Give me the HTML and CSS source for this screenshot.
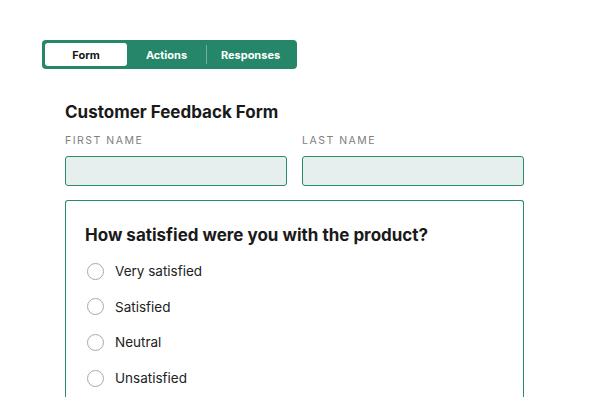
FILE: index.html
```html
<!DOCTYPE html>
<html>
<head>
<meta charset="utf-8">
<link rel="stylesheet" href="styles.css">
</head>
<body>
<div class="page">
  <nav class="tabs">
    <span class="tab tab-form active">Form</span>
    <span class="tab tab-actions">Actions</span>
    <span class="divider"></span>
    <span class="tab tab-responses">Responses</span>
  </nav>
  <form class="form">
    <h1 class="title">Customer Feedback Form</h1>
    <div class="names">
      <label class="field">
        <span class="label">FIRST NAME</span>
        <span class="input"></span>
      </label>
      <label class="field">
        <span class="label">LAST NAME</span>
        <span class="input"></span>
      </label>
    </div>
    <section class="question">
      <h2 class="q-title">How satisfied were you with the product?</h2>
      <ul class="options">
        <li class="option"><span class="radio"></span>Very satisfied</li>
        <li class="option"><span class="radio"></span>Satisfied</li>
        <li class="option"><span class="radio"></span>Neutral</li>
        <li class="option"><span class="radio"></span>Unsatisfied</li>
      </ul>
    </section>
  </form>
</div>
</body>
</html>
```
FILE: styles.css
```css
* { box-sizing: border-box; }
html, body { margin: 0; padding: 0; background: #fff; }
body {
  font-family: Inter, "Noto Sans", "Liberation Sans", sans-serif;
  color: #1b1b1b;
  width: 590px;
  height: 397px;
  overflow: hidden;
}
.page { padding: 40px 0 0 42px; }
.tabs {
  display: inline-flex;
  align-items: stretch;
  background: #25866a;
  padding: 3px;
  border-radius: 4px;
  height: 29px;
}
.tab {
  display: block;
  font-size: 11px;
  font-weight: 700;
  color: #fff;
  text-align: center;
  line-height: 22px;
  padding-top: 1px;
}
.tab-form { width: 82px; }
.tab-actions { width: 79px; }
.tab-responses { width: 87px; }
.tab.active {
  background: #fff;
  color: #151515;
  border-radius: 3px;
}
.divider {
  width: 1px;
  align-self: center;
  height: 19px;
  background: rgba(255, 255, 255, 0.35);
}
.form {
  margin: 0 0 0 23px;
  width: 459px;
}
.title {
  margin: 32px 0 0;
  font-size: 17px;
  line-height: 22px;
  font-weight: 700;
  color: #1a1a1a;
}
.names {
  display: flex;
  gap: 15px;
  margin-top: 11px;
}
.field { flex: 1; display: flex; flex-direction: column; }
.label {
  font-size: 10.5px;
  line-height: 14px;
  letter-spacing: 1.5px;
  color: #808080;
}
.input {
  margin-top: 8px;
  height: 30px;
  border: 1px solid #2a8a6c;
  border-radius: 3px;
  background: #e6efed;
}
.question {
  margin-top: 14px;
  border: 1px solid #2a8a6c;
  border-bottom: none;
  border-radius: 3px 3px 0 0;
  padding: 23px 19px 0;
  height: 200px;
}
.q-title {
  margin: 0;
  font-size: 17px;
  line-height: 22px;
  font-weight: 700;
  color: #1a1a1a;
}
.options {
  list-style: none;
  margin: 15px 0 0;
  padding: 0;
  display: flex;
  flex-direction: column;
  gap: 15.7px;
}
.option {
  display: flex;
  align-items: center;
  font-size: 13.5px;
  line-height: 20px;
  color: #222;
  padding-left: 2px;
}
.radio {
  width: 17px;
  height: 17px;
  border: 1.7px solid #a8a8a8;
  border-radius: 50%;
  margin-right: 11px;
  flex: none;
}
```
